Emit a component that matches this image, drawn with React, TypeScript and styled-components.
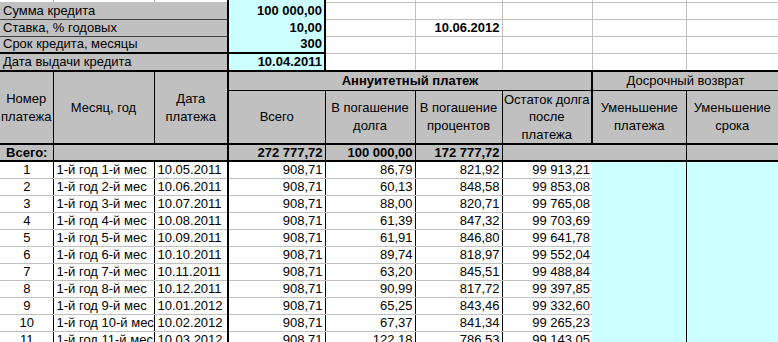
import styled, { createGlobalStyle } from "styled-components";

type Line = "grid" | "dark" | "black" | "thick" | undefined;

const line = (l: Line) => {
    if (l === "thick") return "2px solid #000";
    if (l === "black") return "1px solid #000";
    if (l === "dark") return "1px solid #404040";
    if (l === "grid") return "1px solid #c0c0c0";
    return "none";
};

const GlobalStyle = createGlobalStyle`
    html, body {
        margin: 0;
        padding: 0;
        background: #fff;
        overflow: hidden;
    }
`;

const Sheet = styled.table`
    width: 778px;
    table-layout: fixed;
    border-collapse: collapse;
    font-family: "Liberation Sans", Arial, sans-serif;
    font-size: 13px;
    color: #000;
`;

const Row = styled.tr<{ $h: number }>`
    height: ${(p) => p.$h}px;
`;

const Cell = styled.td<{
    $bg?: "gray" | "cyan";
    $align?: "left" | "center" | "right";
    $bold?: boolean;
    $r?: Line;
    $b?: Line;
}>`
    padding: 0 2px 0 3px;
    line-height: 14px;
    white-space: nowrap;
    overflow: visible;
    vertical-align: middle;
    text-align: ${(p) => p.$align || "left"};
    font-weight: ${(p) => (p.$bold ? 700 : 400)};
    background: ${(p) => (p.$bg === "gray" ? "#c0c0c0" : p.$bg === "cyan" ? "#ccffff" : "#fff")};
    border-right: ${(p) => line(p.$r)};
    border-bottom: ${(p) => line(p.$b)};
`;

const HeadCell = styled(Cell)`
    padding: 0;
    line-height: 17.5px;
    text-align: center;
`;

const widths = [53, 101, 74, 97, 90, 87, 90, 94, 92];

const params = [
    { label: "Сумма кредита", value: "100 000,00", extra: "" },
    { label: "Ставка, % годовых", value: "10,00", extra: "10.06.2012" },
    { label: "Срок кредита, месяцы", value: "300", extra: "" },
];

const payments = [
    ["10.05.2011", "86,79", "821,92", "99 913,21"],
    ["10.06.2011", "60,13", "848,58", "99 853,08"],
    ["10.07.2011", "88,00", "820,71", "99 765,08"],
    ["10.08.2011", "61,39", "847,32", "99 703,69"],
    ["10.09.2011", "61,91", "846,80", "99 641,78"],
    ["10.10.2011", "89,74", "818,97", "99 552,04"],
    ["10.11.2011", "63,20", "845,51", "99 488,84"],
    ["10.12.2011", "90,99", "817,72", "99 397,85"],
    ["10.01.2012", "65,25", "843,46", "99 332,60"],
    ["10.02.2012", "67,37", "841,34", "99 265,23"],
    ["10.03.2012", "122,18", "786,53", "99 143,05"],
];

// wrapped header text, one entry per line as Excel broke it
const Lines = ({ parts }: { parts: string[] }) => (
    <>
        {parts.map((t, i) => (
            <span key={i}>
                {i > 0 && <br />}
                {t}
            </span>
        ))}
    </>
);

export default function App() {
    return (
        <>
            <GlobalStyle />
            <Sheet>
                <colgroup>
                    {widths.map((w, i) => (
                        <col key={i} style={{ width: w }} />
                    ))}
                </colgroup>
                <tbody>
                    <Row $h={2}>
                        <Cell $r="grid" $b="grid" />
                        <Cell $r="grid" $b="grid" />
                        <Cell $r="thick" $b="grid" />
                        <Cell $bg="cyan" $r="thick" />
                        <Cell $r="grid" $b="grid" />
                        <Cell $r="grid" $b="grid" />
                        <Cell $r="grid" $b="grid" />
                        <Cell $r="grid" $b="grid" />
                        <Cell $b="grid" />
                    </Row>

                    {params.map((p, i) => (
                        <Row $h={17} key={p.label}>
                            <Cell colSpan={3} $bg="gray" $r="thick" $b={i === 2 ? "thick" : "dark"}>
                                {p.label}
                            </Cell>
                            <Cell $bg="cyan" $align="right" $bold $r="thick" $b={i === 2 ? "thick" : undefined}>
                                {p.value}
                            </Cell>
                            <Cell $r="grid" $b="grid" />
                            <Cell $r="grid" $b="grid" $align="right" $bold>
                                {p.extra}
                            </Cell>
                            <Cell $r="grid" $b="grid" />
                            <Cell $r="grid" $b="grid" />
                            <Cell $b="grid" />
                        </Row>
                    ))}

                    <Row $h={18}>
                        <Cell colSpan={3} $bg="gray" $r="thick" $b="thick">
                            Дата выдачи кредита
                        </Cell>
                        <Cell $bg="cyan" $align="right" $bold $r="thick" $b="thick">
                            10.04.2011
                        </Cell>
                        <Cell $r="grid" $b="thick" />
                        <Cell $r="grid" $b="thick" />
                        <Cell $r="grid" $b="thick" />
                        <Cell $r="grid" $b="thick" />
                        <Cell $b="thick" />
                    </Row>

                    <Row $h={18}>
                        <HeadCell rowSpan={2} $bg="gray" $r="black" $b="thick">
                            <Lines parts={["Номер", "платежа"]} />
                        </HeadCell>
                        <HeadCell rowSpan={2} $bg="gray" $r="black" $b="thick">
                            Месяц, год
                        </HeadCell>
                        <HeadCell rowSpan={2} $bg="gray" $r="thick" $b="thick">
                            <Lines parts={["Дата", "платежа"]} />
                        </HeadCell>
                        <HeadCell colSpan={4} $bg="gray" $bold $r="thick" $b="black">
                            Аннуитетный платеж
                        </HeadCell>
                        <HeadCell colSpan={2} $bg="gray" $b="black">
                            Досрочный возврат
                        </HeadCell>
                    </Row>

                    <Row $h={54}>
                        <HeadCell $bg="gray" $r="black" $b="thick">
                            Всего
                        </HeadCell>
                        <HeadCell $bg="gray" $r="black" $b="thick">
                            <Lines parts={["В погашение", "долга"]} />
                        </HeadCell>
                        <HeadCell $bg="gray" $r="black" $b="thick">
                            <Lines parts={["В погашение", "процентов"]} />
                        </HeadCell>
                        <HeadCell $bg="gray" $r="thick" $b="thick">
                            <Lines parts={["Остаток долга", "после", "платежа"]} />
                        </HeadCell>
                        <HeadCell $bg="gray" $r="black" $b="thick">
                            <Lines parts={["Уменьшение", "платежа"]} />
                        </HeadCell>
                        <HeadCell $bg="gray" $b="thick">
                            <Lines parts={["Уменьшение", "срока"]} />
                        </HeadCell>
                    </Row>

                    <Row $h={17}>
                        <Cell $bg="gray" $align="center" $bold $r="black" $b="thick">
                            Всего:
                        </Cell>
                        <Cell colSpan={2} $bg="gray" $r="thick" $b="thick" />
                        <Cell $bg="gray" $align="right" $bold $r="black" $b="thick">
                            272 777,72
                        </Cell>
                        <Cell $bg="gray" $align="right" $bold $r="black" $b="thick">
                            100 000,00
                        </Cell>
                        <Cell $bg="gray" $align="right" $bold $r="black" $b="thick">
                            172 777,72
                        </Cell>
                        <Cell colSpan={2} $bg="gray" $r="black" $b="thick" />
                        <Cell $bg="gray" $b="thick" />
                    </Row>

                    {payments.map(([date, debt, interest, rest], i) => (
                        <Row $h={17} key={date}>
                            <Cell $align="center" $r="black" $b="grid">
                                {i + 1}
                            </Cell>
                            <Cell $r="black" $b="grid">
                                1-й год {i + 1}-й мес
                            </Cell>
                            <Cell $r="thick" $b="grid">
                                {date}
                            </Cell>
                            <Cell $align="right" $r="black" $b="grid">
                                908,71
                            </Cell>
                            <Cell $align="right" $r="black" $b="grid">
                                {debt}
                            </Cell>
                            <Cell $align="right" $r="black" $b="grid">
                                {interest}
                            </Cell>
                            <Cell $align="right" $b="grid">
                                {rest}
                            </Cell>
                            <Cell $bg="cyan" $r="black" />
                            <Cell $bg="cyan" />
                        </Row>
                    ))}
                </tbody>
            </Sheet>
        </>
    );
}
